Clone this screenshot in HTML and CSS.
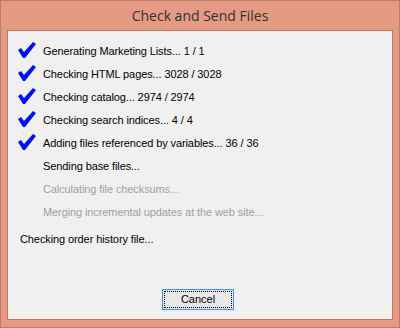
FILE: index.html
```html
<!DOCTYPE html>
<html lang="en">
<head>
    <meta charset="UTF-8">
    <title>Check and Send Files</title>
    <link rel="stylesheet" href="styles.css">
</head>
<body>
    <div class="window">
        <div class="title">Check and Send Files</div>
        <div class="client">
            <div class="steps">
                <div class="step done">
                    <svg class="tick" viewBox="0 0 18 16"><polygon points="0,8 3,6 6,10 15,0 18,2 7,16 5,16"/></svg>
                    <span>Generating Marketing Lists... 1 / 1</span>
                </div>
                <div class="step done">
                    <svg class="tick" viewBox="0 0 18 16"><polygon points="0,8 3,6 6,10 15,0 18,2 7,16 5,16"/></svg>
                    <span>Checking HTML pages... 3028 / 3028</span>
                </div>
                <div class="step done">
                    <svg class="tick" viewBox="0 0 18 16"><polygon points="0,8 3,6 6,10 15,0 18,2 7,16 5,16"/></svg>
                    <span>Checking catalog... 2974 / 2974</span>
                </div>
                <div class="step done">
                    <svg class="tick" viewBox="0 0 18 16"><polygon points="0,8 3,6 6,10 15,0 18,2 7,16 5,16"/></svg>
                    <span>Checking search indices... 4 / 4</span>
                </div>
                <div class="step done">
                    <svg class="tick" viewBox="0 0 18 16"><polygon points="0,8 3,6 6,10 15,0 18,2 7,16 5,16"/></svg>
                    <span>Adding files referenced by variables... 36 / 36</span>
                </div>
                <div class="step">
                    <span>Sending base files...</span>
                </div>
                <div class="step pending">
                    <span>Calculating file checksums...</span>
                </div>
                <div class="step pending">
                    <span>Merging incremental updates at the web site...</span>
                </div>
            </div>
            <div class="status">Checking order history file...</div>
            <div class="actions">
                <button class="btn"><span class="focus">Cancel</span></button>
            </div>
        </div>
    </div>
</body>
</html>
```

FILE: styles.css
```css
body {
    margin: 0;
    font-family: "Liberation Sans", Arial, sans-serif;
    font-size: 11px;
    letter-spacing: -0.1px;
    color: #000;
}
.window {
    width: 400px;
    height: 328px;
    box-sizing: border-box;
    border: 1px solid #c17a69;
    background: #e59a83;
    padding: 0 6px 7px 6px;
    display: flex;
    flex-direction: column;
}
.title {
    height: 29px;
    line-height: 30px;
    text-align: center;
    font-family: "Open Sans", "Noto Sans", sans-serif;
    font-size: 14px;
    letter-spacing: 0;
    color: #333;
}
.client {
    flex: 1;
    border: 1px solid #bd7564;
    background: #f0f0f0;
    display: flex;
    flex-direction: column;
}
.steps {
    padding: 9px 0 0 10px;
}
.step {
    display: flex;
    align-items: flex-start;
    height: 23px;
    line-height: 23px;
    padding-left: 25px;
}
.step.done {
    padding-left: 0;
}
.step.pending {
    color: #a0a0a0;
}
.tick {
    width: 18px;
    height: 16px;
    margin: 2px 7px 0 0;
    fill: #0010f0;
}
.status {
    margin-top: 4px;
    padding-left: 12px;
    line-height: 23px;
}
.actions {
    margin-top: auto;
    margin-bottom: 9px;
    display: flex;
    justify-content: center;
    padding-right: 4px;
}
.btn {
    width: 72px;
    height: 21px;
    padding: 1px;
    border: 1px solid #3c8fe8;
    background: #e8e8e8;
    font-family: "Liberation Sans", Arial, sans-serif;
    font-size: 11px;
    color: #000;
    display: flex;
}
.focus {
    flex: 1;
    border: 1px dotted #000;
    line-height: 15px;
    text-align: center;
}
```
